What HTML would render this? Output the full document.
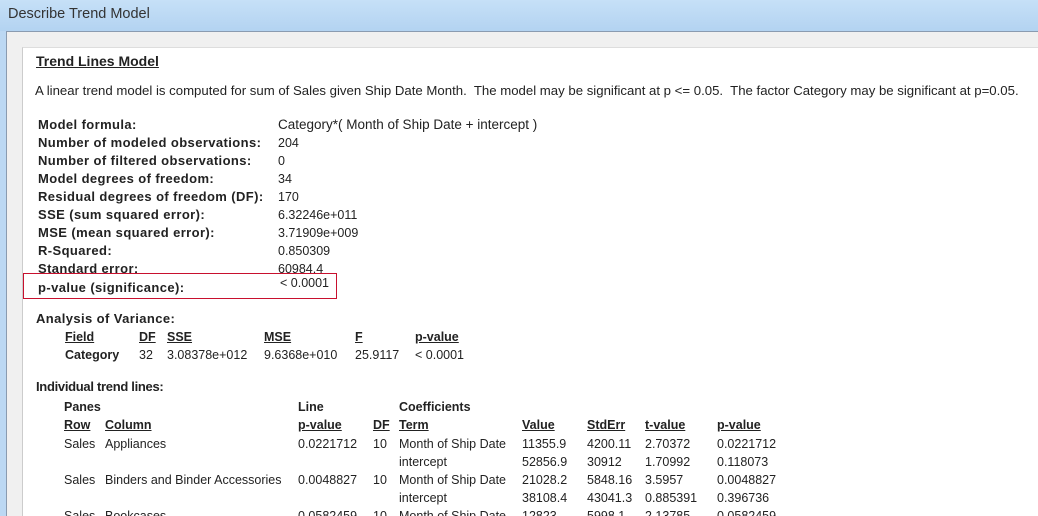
<!DOCTYPE html>
<html><head><style>
html,body{margin:0;width:1038px;height:516px;overflow:hidden}
body{background:#bcd8f3;font-family:"Liberation Sans",sans-serif;font-size:12.5px;color:#222;position:relative}
.t{position:absolute;white-space:nowrap;line-height:14px}
.b{font-weight:bold}
.u{text-decoration:underline}
.lb{font-size:13px;letter-spacing:0.4px}
</style></head><body>
<div style="position:absolute;left:0;top:0;width:1038px;height:31px;background:linear-gradient(#c6e0f7,#b3d3f1)"></div>
<div class="t" style="left:8px;top:7px;font-size:14.5px;color:#333">Describe Trend Model</div>
<div style="position:absolute;left:6px;top:31px;width:1032px;height:485px;background:#f0f0f0;border-top:1px solid #8a9bb0;border-left:1px solid #8a9bb0"></div>
<div style="position:absolute;left:22px;top:47px;width:1016px;height:469px;background:#fff;border-top:1px solid #ddd;border-left:1px solid #ccc"></div>
<div class="t b u" style="left:36px;top:54px;font-size:14px">Trend Lines Model</div>
<div class="t" style="left:35px;top:84px;font-size:13.2px">A linear trend model is computed for sum of Sales given Ship Date Month.&nbsp; The model may be significant at p &lt;= 0.05.&nbsp; The factor Category may be significant at p=0.05.</div>
<div class="t b lb" style="left:38px;top:116px;line-height:18px">Model formula:<br>Number of modeled observations:<br>Number of filtered observations:<br>Model degrees of freedom:<br>Residual degrees of freedom (DF):<br>SSE (sum squared error):<br>MSE (mean squared error):<br>R-Squared:<br>Standard error:</div>
<div class="t" style="left:278px;top:116px;line-height:18px"><span style="font-size:13.5px">Category*( Month of Ship Date + intercept )</span><br>204<br>0<br>34<br>170<br>6.32246e+011<br>3.71909e+009<br>0.850309<br>60984.4</div>
<div class="t b lb" style="left:38px;top:281px">p-value (significance):</div>
<div class="t" style="left:280px;top:276px">&lt; 0.0001</div>
<div style="position:absolute;left:23px;top:273px;width:312px;height:24px;border:1.5px solid #c8102e"></div>
<div class="t b lb" style="left:36px;top:312px">Analysis of Variance:</div>
<div class="t b u" style="left:65px;top:330px">Field</div>
<div class="t b u" style="left:139px;top:330px">DF</div>
<div class="t b u" style="left:167px;top:330px">SSE</div>
<div class="t b u" style="left:264px;top:330px">MSE</div>
<div class="t b u" style="left:355px;top:330px">F</div>
<div class="t b u" style="left:415px;top:330px">p-value</div>
<div class="t b" style="left:65px;top:348px">Category</div>
<div class="t" style="left:139px;top:348px">32</div>
<div class="t" style="left:167px;top:348px">3.08378e+012</div>
<div class="t" style="left:264px;top:348px">9.6368e+010</div>
<div class="t" style="left:355px;top:348px">25.9117</div>
<div class="t" style="left:415px;top:348px">&lt; 0.0001</div>
<div class="t b" style="left:36px;top:380px;font-size:13px;letter-spacing:-0.3px">Individual trend lines:</div>
<div class="t b" style="left:64px;top:400px">Panes</div>
<div class="t b" style="left:298px;top:400px">Line</div>
<div class="t b" style="left:399px;top:400px">Coefficients</div>
<div class="t b u" style="left:64px;top:418px">Row</div>
<div class="t b u" style="left:105px;top:418px">Column</div>
<div class="t b u" style="left:298px;top:418px">p-value</div>
<div class="t b u" style="left:373px;top:418px">DF</div>
<div class="t b u" style="left:399px;top:418px">Term</div>
<div class="t b u" style="left:522px;top:418px">Value</div>
<div class="t b u" style="left:587px;top:418px">StdErr</div>
<div class="t b u" style="left:645px;top:418px">t-value</div>
<div class="t b u" style="left:717px;top:418px">p-value</div>
<div class="t" style="left:64px;top:435px;line-height:18px">Sales<br><br>Sales<br><br>Sales</div>
<div class="t" style="left:105px;top:435px;line-height:18px">Appliances<br><br>Binders and Binder Accessories<br><br>Bookcases</div>
<div class="t" style="left:298px;top:435px;line-height:18px">0.0221712<br><br>0.0048827<br><br>0.0582459</div>
<div class="t" style="left:373px;top:435px;line-height:18px">10<br><br>10<br><br>10</div>
<div class="t" style="left:399px;top:435px;line-height:18px">Month of Ship Date<br>intercept<br>Month of Ship Date<br>intercept<br>Month of Ship Date</div>
<div class="t" style="left:522px;top:435px;line-height:18px">11355.9<br>52856.9<br>21028.2<br>38108.4<br>12823</div>
<div class="t" style="left:587px;top:435px;line-height:18px">4200.11<br>30912<br>5848.16<br>43041.3<br>5998.1</div>
<div class="t" style="left:645px;top:435px;line-height:18px">2.70372<br>1.70992<br>3.5957<br>0.885391<br>2.13785</div>
<div class="t" style="left:717px;top:435px;line-height:18px">0.0221712<br>0.118073<br>0.0048827<br>0.396736<br>0.0582459</div>
</body></html>
